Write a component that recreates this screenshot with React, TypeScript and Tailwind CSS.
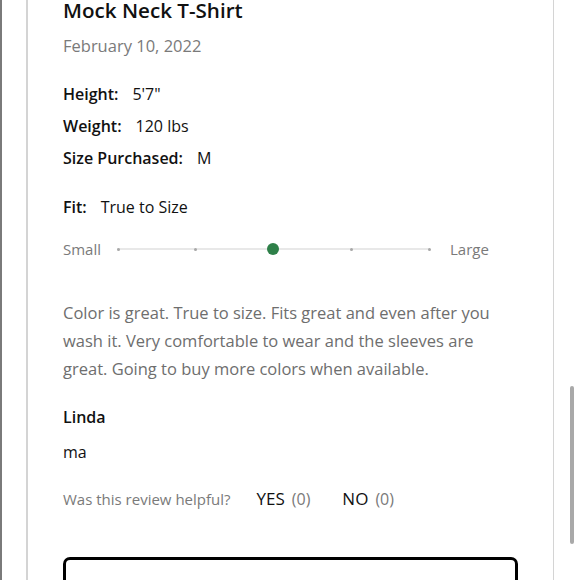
import React from "react";

export default function App() {
  const font = { fontFamily: "'Open Sans', 'Noto Sans', sans-serif" };
  return (
    <div className="w-[580px] h-[580px] overflow-hidden bg-white flex relative" style={font}>
      <div className="w-[2px] h-full bg-[#7a7a7a] shrink-0" />
      <div className="w-[24px] shrink-0" />
      <div className="w-[2px] h-full bg-[#d4d4d4] shrink-0" />
      <div className="w-[525px] h-full pl-[35px] shrink-0">
        <div className="mt-[-4px] text-[20.6px] leading-[28px] font-semibold text-[#111]">Mock Neck T-Shirt</div>
        <div className="mt-[8px] text-[16.5px] leading-[28px] text-[#7a7a7a]">February 10, 2022</div>
        <div className="mt-[18px] text-[16px] text-[#111]">
          <div className="leading-[32px]"><span className="font-semibold">Height:</span><span className="ml-[14px]">5'7"</span></div>
          <div className="leading-[32px]"><span className="font-semibold">Weight:</span><span className="ml-[14px]">120 lbs</span></div>
          <div className="leading-[32px]"><span className="font-semibold">Size Purchased:</span><span className="ml-[14px]">M</span></div>
        </div>
        <div className="mt-[17px] text-[16px] leading-[32px] text-[#111]"><span className="font-semibold">Fit:</span><span className="ml-[14px]">True to Size</span></div>
        <div className="mt-[10px] h-[32px] flex items-center text-[15px] text-[#7a7a7a]">
          <div className="w-[54px]">Small</div>
          <div className="w-[313px] relative h-[12px] flex items-center">
            <div className="w-full h-[2px] bg-[#e8e8e8]" />
            <div className="absolute left-0 top-[5px] w-[3px] h-[3px] rounded-full bg-[#a8a8a8]" />
            <div className="absolute left-[77px] top-[5px] w-[3px] h-[3px] rounded-full bg-[#a8a8a8]" />
            <div className="absolute left-[233px] top-[5px] w-[3px] h-[3px] rounded-full bg-[#a8a8a8]" />
            <div className="absolute left-[311px] top-[5px] w-[3px] h-[3px] rounded-full bg-[#a8a8a8]" />
            <div className="absolute left-[150px] top-0 w-[12px] h-[12px] rounded-full bg-[#2e8049]" />
          </div>
          <div className="ml-[20px]">Large</div>
        </div>
        <div className="mt-[34px] w-[440px] text-[16.5px] leading-[28px] text-[#6e6e6e]">
          Color is great. True to size. Fits great and even after you wash it. Very comfortable to wear and the sleeves are great. Going to buy more colors when available.
        </div>
        <div className="mt-[20px] text-[16px] leading-[28px] font-semibold text-[#111]">Linda</div>
        <div className="mt-[7px] text-[16px] leading-[28px] text-[#111]">ma</div>
        <div className="mt-[19px] flex items-center leading-[28px]">
          <span className="text-[15px] text-[#7a7a7a]">Was this review helpful?</span>
          <span className="ml-[26px] text-[17px] text-[#111]">YES</span>
          <span className="ml-[7px] text-[16px] text-[#7a7a7a]">(0)</span>
          <span className="ml-[32px] text-[17px] text-[#111]">NO</span>
          <span className="ml-[7px] text-[16px] text-[#7a7a7a]">(0)</span>
        </div>
        <div className="mt-[44px] w-[455px] h-[50px] border-[3px] border-black rounded-[7px]" />
      </div>
      <div className="w-[1px] h-full bg-[#d4d4d4] shrink-0" />
      <div className="flex-1 relative">
        <div className="absolute left-[16px] top-[386px] w-[4px] h-[158px] rounded-full bg-[#a9a9a9]" />
      </div>
    </div>
  );
}
